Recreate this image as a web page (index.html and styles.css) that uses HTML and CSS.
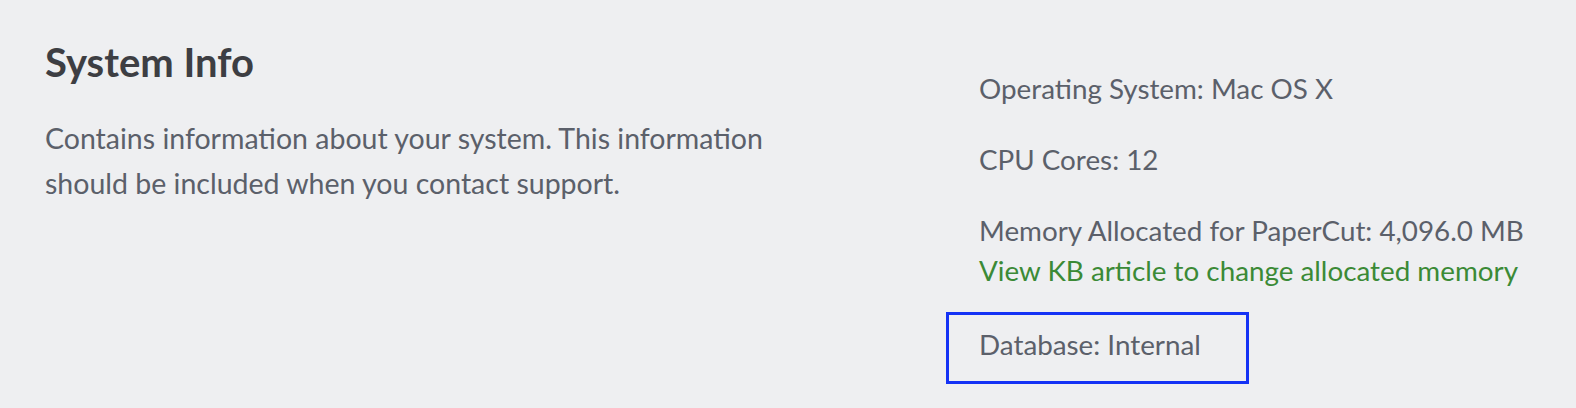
FILE: index.html
```html
<!DOCTYPE html>
<html lang="en">
<head>
    <meta charset="UTF-8">
    <meta name="viewport" content="width=device-width, initial-scale=1.0">
    <title>System Info</title>
    <link rel="stylesheet" href="styles.css">
</head>
<body>
    <section class="settings-section">
        <div class="section-intro">
            <h2 class="section-title">System Info</h2>
            <p class="section-desc">Contains information about your system. This information should be included when you contact support.</p>
        </div>

        <ul class="info-list">
            <li class="info-item">Operating System: Mac OS X</li>
            <li class="info-item">CPU Cores: 12</li>
            <li class="info-item">
                Memory Allocated for PaperCut: 4,096.0 MB<br>
                <a class="kb-link" href="#">View KB article to change allocated memory</a>
            </li>
            <li class="info-item highlighted">Database: Internal</li>
            <li class="info-item">Server time zone: Australia/Melbourne (AEST)</li>
        </ul>
    </section>
</body>
</html>
```

FILE: styles.css
```css
html, body {
    margin: 0;
    padding: 0;
    height: 100%;
}

body {
    background-color: #eeeff1;
    font-family: 'Lato', 'Noto Sans', sans-serif;
    color: #5b606a;
    overflow: hidden;
}

.settings-section {
    display: flex;
    padding: 38px 0 0 45px;
}

.section-intro {
    width: 901px;
    flex-shrink: 0;
}

.section-title {
    margin: 0;
    font-size: 40px;
    line-height: 48px;
    font-weight: 700;
    color: #3d3e43;
}

.section-desc {
    margin: 30px 0 0;
    max-width: 770px;
    font-size: 28.5px;
    line-height: 45px;
}

.info-list {
    list-style: none;
    margin: 0;
    padding: 31px 0 0;
}

.info-item {
    margin-bottom: 31px;
    padding-left: 33px;
    font-size: 27.8px;
    line-height: 40px;
    white-space: nowrap;
}

.info-item.highlighted {
    width: 303px;
    box-sizing: border-box;
    margin: -10px 0 16px;
    padding: 10px 0 16px 30px;
    border: 3px solid #1432f5;
}

.kb-link {
    color: #3b8a36;
    text-decoration: none;
}

.kb-link:hover {
    text-decoration: underline;
}
```
